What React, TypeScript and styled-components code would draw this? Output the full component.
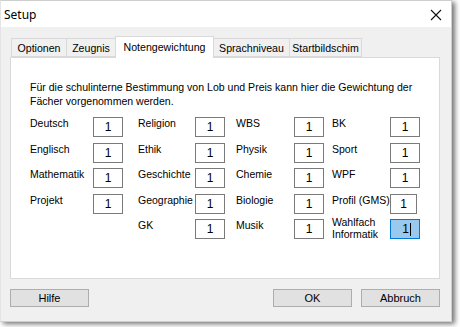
import styled, { createGlobalStyle } from "styled-components";

const GlobalStyle = createGlobalStyle`
  html, body {
    margin: 0;
    padding: 0;
    background: #ffffff;
  }
  body {
    width: 460px;
    height: 327px;
    overflow: hidden;
    font-family: "Liberation Sans", Arial, sans-serif;
  }
`;

type Subject = { name: string; lines?: string[]; narrow?: boolean; focused?: boolean };

const columns: { labelWidth: number; width: number; items: Subject[] }[] = [
  {
    labelWidth: 63,
    width: 108,
    items: [{ name: "Deutsch" }, { name: "Englisch" }, { name: "Mathematik" }, { name: "Projekt" }],
  },
  {
    labelWidth: 57,
    width: 98,
    items: [
      { name: "Religion" },
      { name: "Ethik" },
      { name: "Geschichte" },
      { name: "Geographie" },
      { name: "GK" },
    ],
  },
  {
    labelWidth: 58,
    width: 96,
    items: [
      { name: "WBS" },
      { name: "Physik" },
      { name: "Chemie" },
      { name: "Biologie" },
      { name: "Musik" },
    ],
  },
  {
    labelWidth: 58,
    width: 90,
    items: [
      { name: "BK" },
      { name: "Sport" },
      { name: "WPF" },
      { name: "Profil (GMS)", narrow: true },
      { name: "Wahlfach", lines: ["Wahlfach", "Informatik"], focused: true },
    ],
  },
];

const tabs = [
  { label: "Optionen", width: 56 },
  { label: "Zeugnis", width: 50 },
  { label: "Notengewichtung", width: 99, active: true },
  { label: "Sprachniveau", width: 77 },
  { label: "Startbildschim", width: 73 },
];

export default function App() {
  return (
    <>
      <GlobalStyle />
      <Window>
        <TitleBar>
          <Title>Setup</Title>
          <CloseIcon width="12" height="12" viewBox="0 0 12 12">
            <path d="M1 1 L11 11 M11 1 L1 11" stroke="#111" strokeWidth="1.1" fill="none" />
          </CloseIcon>
        </TitleBar>

        <Body>
          <TabStrip>
            {tabs.map((t) => (
              <Tab key={t.label} $active={t.active} $width={t.width}>
                {t.label}
              </Tab>
            ))}
          </TabStrip>

          <Panel>
            <Intro>
              Für die schulinterne Bestimmung von Lob und Preis kann hier die Gewichtung der
              <br />
              Fächer vorgenommen werden.
            </Intro>

            <SubjectGrid>
              {columns.map((col, i) => (
                <SubjectColumn key={i} $width={col.width}>
                  {col.items.map((s) => (
                    <SubjectRow key={s.name} $labelWidth={col.labelWidth}>
                      {s.lines ? (
                        <TwoLineLabel>
                          {s.lines[0]}
                          <br />
                          {s.lines[1]}
                        </TwoLineLabel>
                      ) : (
                        <Label>{s.name}</Label>
                      )}
                      <Field $narrow={s.narrow} $focused={s.focused}>
                        {s.focused ? (
                          <Selected>
                            1<Caret />
                          </Selected>
                        ) : (
                          "1"
                        )}
                      </Field>
                    </SubjectRow>
                  ))}
                </SubjectColumn>
              ))}
            </SubjectGrid>
          </Panel>

          <Footer>
            <Button>Hilfe</Button>
            <RightButtons>
              <Button>OK</Button>
              <Button>Abbruch</Button>
            </RightButtons>
          </Footer>
        </Body>
      </Window>
    </>
  );
}

const Window = styled.div`
  width: 452px;
  height: 322px;
  box-sizing: border-box;
  border: 1px solid #cfcfcf;
  border-left-color: #e4e4e4;
  background: #f0f0f0;
  box-shadow: 3px 2px 5px rgba(0, 0, 0, 0.55);
  display: flex;
  flex-direction: column;
`;

const TitleBar = styled.div`
  height: 26px;
  background: #ffffff;
  display: flex;
  align-items: center;
  justify-content: space-between;
  padding: 0 9px 0 3px;
`;

const Title = styled.span`
  font-family: "Noto Sans", "Open Sans", sans-serif;
  font-size: 12px;
  color: #000;
`;

const CloseIcon = styled.svg`
  display: block;
  margin-top: 1px;
`;

const Body = styled.div`
  flex: 1;
  display: flex;
  flex-direction: column;
  padding: 9px 12px 0 9px;
`;

const TabStrip = styled.div`
  display: flex;
  align-items: flex-end;
  height: 21px;
  padding-left: 2px;
  position: relative;
  z-index: 1;
`;

const Tab = styled.div<{ $active?: boolean; $width: number }>`
  box-sizing: border-box;
  width: ${(p) => p.$width}px;
  height: ${(p) => (p.$active ? "22px" : "19px")};
  margin-bottom: ${(p) => (p.$active ? "-1px" : "0")};
  padding-top: ${(p) => (p.$active ? "3px" : "2px")};
  border: 1px solid #d9d9d9;
  border-bottom: ${(p) => (p.$active ? "none" : "1px solid #d9d9d9")};
  margin-left: -1px;
  background: ${(p) => (p.$active ? "#ffffff" : "#f0f0f0")};
  font-size: 10.6px;
  line-height: 14px;
  text-align: center;
  color: #000;
  white-space: nowrap;
`;

const Panel = styled.div`
  box-sizing: border-box;
  width: 430px;
  height: 222px;
  background: #ffffff;
  border: 1px solid #d9d9d9;
  padding: 22px 0 0 19px;
`;

const Intro = styled.div`
  font-size: 10.55px;
  line-height: 14px;
  color: #000;
`;

const SubjectGrid = styled.div`
  display: flex;
  margin-top: 9px;
`;

const SubjectColumn = styled.div<{ $width: number }>`
  width: ${(p) => p.$width}px;
  display: flex;
  flex-direction: column;
  gap: 5.5px;
`;

const SubjectRow = styled.div<{ $labelWidth: number }>`
  display: grid;
  grid-template-columns: ${(p) => p.$labelWidth}px auto;
  align-items: start;
  height: 20px;
`;

const Label = styled.span`
  font-size: 10.5px;
  line-height: 14px;
  margin-top: -1px;
  color: #000;
  white-space: nowrap;
`;

const TwoLineLabel = styled.span`
  font-size: 10.5px;
  line-height: 12px;
  margin-top: -3px;
  color: #000;
  white-space: nowrap;
`;

const Field = styled.div<{ $narrow?: boolean; $focused?: boolean }>`
  box-sizing: border-box;
  width: ${(p) => (p.$narrow ? "27px" : "30px")};
  height: 20px;
  border: 1px solid ${(p) => (p.$focused ? "#0078d7" : "#7a7a7a")};
  background: ${(p) => (p.$focused ? "#99c9ef" : "#ffffff")};
  display: flex;
  align-items: center;
  justify-content: center;
  font-size: 12px;
  color: #000;
`;

const Selected = styled.span`
  display: inline-flex;
  align-items: center;
  margin-left: 3px;
`;

const Caret = styled.span`
  display: inline-block;
  width: 1px;
  height: 13px;
  background: #000;
  margin-left: 1px;
`;

const Footer = styled.div`
  display: flex;
  justify-content: space-between;
  width: 430px;
  margin-top: 10px;
`;

const RightButtons = styled.div`
  display: flex;
  gap: 9px;
`;

const Button = styled.div`
  box-sizing: border-box;
  width: 79px;
  height: 18px;
  background: #e1e1e1;
  border: 1px solid #adadad;
  display: flex;
  align-items: center;
  justify-content: center;
  font-size: 11px;
  color: #000;
`;
